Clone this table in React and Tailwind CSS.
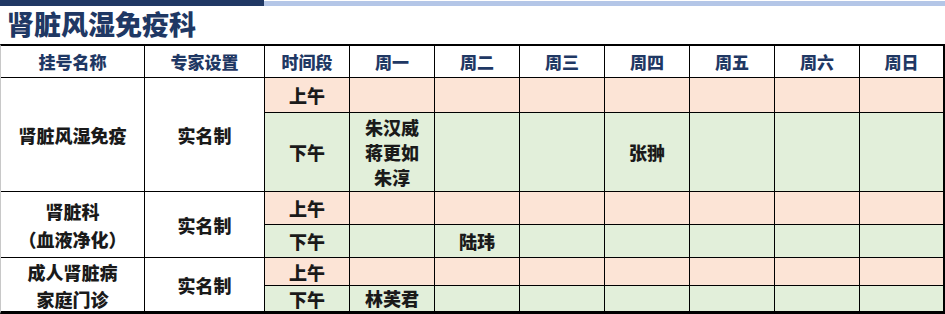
import React from 'react';

const DAYS = ['周一', '周二', '周三', '周四', '周五', '周六', '周日'];

// 每个科室两行：上午 / 下午，排班按周一到周日
const DEPTS = [
  {
    name: ['肾脏风湿免疫'],
    nameLeading: 'leading-[28px]',
    mode: '实名制',
    am: ['', '', '', '', '', '', ''],
    pm: [['朱汉威', '蒋更如', '朱淳'], '', '', '张翀', '', '', ''],
  },
  {
    name: ['肾脏科', '（血液净化）'],
    nameLeading: 'leading-[28px]',
    mode: '实名制',
    am: ['', '', '', '', '', '', ''],
    pm: ['', '陆玮', '', '', '', '', ''],
  },
  {
    name: ['成人肾脏病', '家庭门诊'],
    nameLeading: 'leading-[27px] pt-[3px]',
    mode: '实名制',
    am: ['', '', '', '', '', '', ''],
    pm: ['林芙君', '', '', '', '', '', ''],
  },
];

const Cell = ({ value, bg }) => (
  <div className={`${bg} flex flex-col items-center justify-center text-[18px] font-black text-[#1a1a1a] leading-[25px]`}>
    {Array.isArray(value) ? value.map(v => <span key={v}>{v}</span>) : value}
  </div>
);

export default function App() {
  return (
    <div className="w-[945px] h-[314px] bg-white overflow-hidden" style={{ fontFamily: '"Noto Sans CJK SC", "Noto Sans", sans-serif' }}>
      {/* 标题区 */}
      <div className="h-[44px] flex flex-col">
        <div className="flex h-[6px]">
          <div className="w-[264px] bg-[#203864]" />
          <div className="flex-1 bg-[#b4c6e7] mt-px" />
        </div>
        <h1 className="pl-[7px] text-[27px] leading-[36px] font-black text-[#1f3864]">肾脏风湿免疫科</h1>
      </div>

      {/* 排班表 */}
      <div className="border-l border-l-[#c8c8c8] border-t-2 border-r-2 border-b-[3px] border-black bg-black">
        <div className="grid grid-cols-[143px_119px_repeat(7,84px)_83px] grid-rows-[31px_34px_78px_32px_32px_27px_25px] gap-px">
          {['挂号名称', '专家设置', '时间段', ...DAYS].map(h => (
            <div key={h} className="bg-white flex items-center justify-center text-[17px] leading-none font-black text-[#1f3864]">
              {h}
            </div>
          ))}

          {DEPTS.map((d, i) => (
            <React.Fragment key={i}>
              <div className={`row-span-2 bg-white flex flex-col items-center justify-center text-[18px] font-black text-[#1a1a1a] ${d.nameLeading}`}>
                {d.name.map(n => <span key={n}>{n}</span>)}
              </div>
              <div className="row-span-2 bg-white flex items-center justify-center text-[18px] leading-none font-black text-[#1a1a1a]">
                {d.mode}
              </div>
              <div className="bg-[#fce4d6] flex items-center justify-center text-[18px] leading-none font-black text-[#1a1a1a]">上午</div>
              {d.am.map((v, j) => <Cell key={`am${j}`} value={v} bg="bg-[#fce4d6]" />)}
              <div className="bg-[#e2efda] flex items-center justify-center text-[18px] leading-none font-black text-[#1a1a1a]">下午</div>
              {d.pm.map((v, j) => <Cell key={`pm${j}`} value={v} bg="bg-[#e2efda]" />)}
            </React.Fragment>
          ))}
        </div>
      </div>
    </div>
  );
}
